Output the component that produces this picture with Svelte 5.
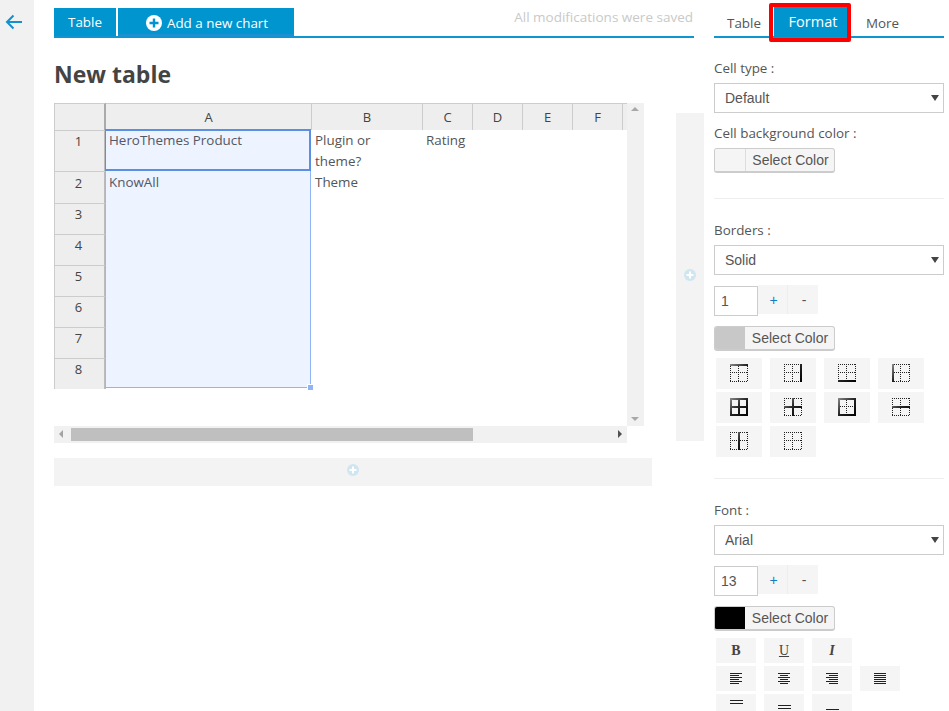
<script>
  const cols = ['A', 'B', 'C', 'D', 'E', 'F'];
  const rows = [
    { n: 1, a: 'HeroThemes Product', b: 'Plugin or theme?', c: 'Rating' },
    { n: 2, a: 'KnowAll', b: 'Theme', c: '' },
    { n: 3 }, { n: 4 }, { n: 5 }, { n: 6 }, { n: 7 }, { n: 8 }
  ];
  const T = 'M0 1H18', M = 'M0 9H18', B = 'M0 17H18', L = 'M1 0V18', C = 'M9 0V18', R = 'M17 0V18';
  const dotT = 'M0 .5H18', dotM = 'M0 8.500H18', dotB = 'M0 17.500H18', dotL = 'M.5 0V18', dotC = 'M8.500 0V18', dotR = 'M17.500 0V18';
  const borderIcons = [
    [T], [R], [B], [L],
    [T, M, B, L, C, R], [M, C], [T, B, L, R], [M],
    [C], []
  ];
  const dotted = [dotT, dotM, dotB, dotL, dotC, dotR];
  const aligns = [
    { side: 'l', short: 9 },
    { side: 'c', short: 8 },
    { side: 'r', short: 9 },
    { side: 'l', short: 12 }
  ];
  function lineX(a, w) {
    if (a.side === 'l') return 0;
    if (a.side === 'r') return 12 - w;
    return (12 - w) / 2;
  }
</script>

{#snippet selectBox(value)}
  <div class="select-wrap">
    <select><option>{value}</option></select>
  </div>
{/snippet}

{#snippet colorBtn(kind)}
  <button class="color-btn">
    <span class="swatch {kind}"></span>
    <span class="color-label">Select Color</span>
  </button>
{/snippet}

{#snippet spinner(value)}
  <div class="spinner">
    <input value={value} />
    <button class="plus">+</button>
    <button class="minus">-</button>
  </div>
{/snippet}

<svg class="defs" width="0" height="0" aria-hidden="true">
  <defs>
    <linearGradient id="ink" gradientUnits="userSpaceOnUse" x1="0" y1="0" x2="18" y2="18">
      <stop offset="0" stop-color="#8a8a8a" />
      <stop offset="0.500" stop-color="#222" />
      <stop offset="1" stop-color="#000" />
    </linearGradient>
  </defs>
</svg>

<div class="page">
  <aside class="rail">
    <svg class="back" width="18" height="16" viewBox="0 0 18 16" aria-label="Back">
      <path d="M17 8H2M8.500 1.500 2 8l6.500 6.500" fill="none" stroke="#1390d0" stroke-width="2" />
    </svg>
  </aside>

  <main class="main">
    <div class="topbar">
      <button class="tab-btn table-btn">Table</button>
      <button class="tab-btn chart-btn">
        <svg width="16" height="16" viewBox="0 0 16 16"><circle cx="8" cy="8" r="8" fill="#fff" /><path d="M8 3.500v9M3.500 8h9" stroke="#0095cf" stroke-width="2.400" /></svg>
        Add a new chart
      </button>
      <span class="saved">All modifications were saved</span>
    </div>

    <h1>New table</h1>

    <div class="work">
      <div class="sheet-area">
        <div class="sheet-row">
          <div class="sheet">
            <div class="cell corner"></div>
            {#each cols as c}<div class="cell col-head">{c}</div>{/each}
            <div class="cell tail-head"></div>
            {#each rows as r}
              <div class="cell row-head" class:second-row={r.n === 2}>{r.n}</div>
              <div class="cell data" class:second-row={r.n === 2}>{r.a ?? ''}</div>
              <div class="cell data b" class:second-row={r.n === 2}>{r.b ?? ''}</div>
              <div class="cell data">{r.c ?? ''}</div>
              <div class="cell data"></div>
              <div class="cell data"></div>
              <div class="cell data"></div>
              <div class="cell data"></div>
            {/each}
            <div class="range"></div>
            <div class="active"></div>
            <div class="handle"></div>
          </div>
          <div class="vscroll">
            <span class="arrow up"></span>
            <span class="arrow down"></span>
          </div>
        </div>
        <div class="hscroll">
          <span class="arrow left"></span>
          <div class="thumb"></div>
          <span class="arrow right"></span>
        </div>
        <div class="add-row">
          <svg width="12" height="12" viewBox="0 0 12 12"><circle cx="6" cy="6" r="6" fill="#cfe6f0" /><path d="M6 2.500v7M2.500 6h7" stroke="#fff" stroke-width="2" /></svg>
        </div>
      </div>
      <div class="add-col">
        <svg width="12" height="12" viewBox="0 0 12 12"><circle cx="6" cy="6" r="6" fill="#cfe6f0" /><path d="M6 2.500v7M2.500 6h7" stroke="#fff" stroke-width="2" /></svg>
      </div>
    </div>
  </main>

  <section class="panel">
    <div class="panel-tabs">
      <span class="ptab t1">Table</span>
      <span class="ptab active-tab">Format</span>
      <span class="ptab t3">More</span>
      <span class="highlight"></span>
    </div>

    <label class="first">Cell type :</label>
    {@render selectBox('Default')}
    <label class="second">Cell background color :</label>
    {@render colorBtn('blank')}

    <hr class="div1" />

    <label>Borders :</label>
    {@render selectBox('Solid')}
    {@render spinner('1')}
    {@render colorBtn('grey')}
    <div class="icon-grid">
      {#each borderIcons as solid}
        <button class="icon-btn" aria-label="Border">
          <svg width="18" height="18" viewBox="0 0 18 18">
            {#each dotted as d}<path d={d} fill="none" stroke="#222" stroke-width="1" stroke-dasharray="1 1" />{/each}
            {#each solid as d}<path d={d} fill="none" stroke="url(#ink)" stroke-width="2" />{/each}
          </svg>
        </button>
      {/each}
    </div>

    <hr class="div2" />

    <label>Font :</label>
    {@render selectBox('Arial')}
    {@render spinner('13')}
    {@render colorBtn('black')}
    <div class="font-grid">
      <button class="fbtn serif bold">B</button>
      <button class="fbtn serif under">U</button>
      <button class="fbtn serif ital">I</button>
      <span></span>
      {#each aligns as a}
        <button class="fbtn" aria-label="Align">
          <svg width="12" height="13" viewBox="0 0 12 13">
            {#each [0, 1, 2, 3, 4, 5] as i}
              {@const w = i % 2 ? a.short : 12}
              <rect x={lineX(a, w)} y={i * 2 + 1} width={w} height="1" fill="#222" />
            {/each}
          </svg>
        </button>
      {/each}
      <button class="fbtn valign" aria-label="Top"><span class="vl top"></span></button>
      <button class="fbtn valign" aria-label="Middle"><span class="vl mid"></span></button>
      <button class="fbtn valign" aria-label="Bottom"><span class="vl bot"></span></button>
    </div>
  </section>
</div>

<style>
  :global(body) { margin: 0; background: #fff; overflow: hidden; }
  .defs { position: absolute; }
  .page {
    display: flex;
    width: 949px;
    height: 711px;
    overflow: hidden;
    font-family: "Open Sans", sans-serif;
    color: #555;
  }
  .rail { width: 34px; flex: none; background: #f1f1f1; box-sizing: border-box; padding: 14px 0 0 5px; }
  .back { display: block; }

  .main { width: 640px; margin-left: 20px; flex: none; }
  .topbar {
    display: flex;
    padding-top: 8px;
    height: 28px;
    border-bottom: 2px solid #0f95cf;
    align-items: stretch;
  }
  .tab-btn {
    border: 0;
    background: #0095cf;
    color: #fff;
    font: 13.400px "Open Sans", sans-serif;
    padding: 0;
    display: flex;
    align-items: center;
    justify-content: center;
  }
  .table-btn { width: 62px; }
  .chart-btn { width: 176px; margin-left: 2px; gap: 5px; box-shadow: inset 0 -2px 0 #1f8fd0; padding: 1px 0 0 2px; }
  .saved { margin-left: auto; margin-right: 1px; color: #c9c9c9; font-size: 13.500px; line-height: 18px; }

  h1 { margin: 0 0 12px; padding-top: 20px; height: 33px; font-size: 23px; line-height: 33px; font-weight: 700; color: #444; }

  .work { display: flex; align-items: flex-start; }
  .sheet-area { width: 598px; flex: none; }
  .sheet-row { display: flex; width: 590px; height: 323px; }
  .sheet {
    position: relative;
    width: 573px;
    height: 323px;
    display: grid;
    grid-template-columns: 52px 206px 111px 50px 50px 50px 50px 4px;
    grid-template-rows: 27px 41px 32px 31px 31px 31px 31px 31px 31px;
    align-content: start;
  }
  .cell { box-sizing: border-box; font-size: 13.400px; line-height: 21px; }
  .corner, .col-head, .tail-head { background: #eee; border-top: 1px solid #ccc; border-right: 1px solid #ccc; }
  .corner { border-left: 1px solid #ccc; border-right: 2px solid #aaa; }
  .col-head { text-align: center; font-size: 13px; line-height: 26px; color: #444; }
  .tail-head { border-right: 0; }
  .row-head {
    background: #eee;
    border-left: 1px solid #ccc;
    border-top: 1px solid #ccc;
    border-right: 2px solid #bbb;
    text-align: center;
    color: #444;
    font-size: 13px;
    line-height: 20px;
    padding-right: 2px;
  }
  .data { padding: 0 3px; color: #555; }
  .data.b { padding-right: 14px; }
  .second-row { padding-top: 1px; }
  .range {
    position: absolute;
    left: 51px;
    top: 26px;
    width: 206px;
    height: 259px;
    box-sizing: border-box;
    background: rgba(50, 120, 255, 0.09);
    border-right: 1px solid #8fb5f6;
    border-bottom: 1px solid #8fb5f6;
    pointer-events: none;
  }
  .active {
    position: absolute;
    left: 51px;
    top: 26px;
    width: 206px;
    height: 42px;
    box-sizing: border-box;
    border: 2px solid #5a8fe2;
    border-left-width: 1px;
    pointer-events: none;
  }
  .handle { position: absolute; left: 253px; top: 281px; width: 5px; height: 5px; background: #8fb5f6; border: 1px solid #fff; }

  .vscroll { position: relative; width: 17px; background: #f1f1f1; }
  .hscroll { position: relative; width: 573px; height: 17px; background: #f1f1f1; }
  .thumb { position: absolute; left: 17px; top: 2px; width: 402px; height: 13px; background: #bfbfbf; }
  .arrow { position: absolute; width: 0; height: 0; border: 4px solid transparent; }
  .up { left: 4px; top: 4px; border-top: 0; border-bottom-color: #a8a8a8; }
  .down { left: 4px; bottom: 5px; border-bottom: 0; border-top-color: #a8a8a8; }
  .left { left: 5px; top: 4px; border-left: 0; border-right-color: #a3a3a3; }
  .right { right: 5px; top: 4px; border-right: 0; border-left-color: #505050; }

  .add-row {
    margin-top: 15px;
    height: 28px;
    box-sizing: border-box;
    padding-bottom: 4px;
    background: #f3f3f3;
    display: flex;
    align-items: center;
    justify-content: center;
  }
  .add-col {
    margin-left: 24px;
    margin-top: 10px;
    width: 28px;
    height: 328px;
    box-sizing: border-box;
    padding-bottom: 4px;
    flex: none;
    background: #f3f3f3;
    display: flex;
    align-items: center;
    justify-content: center;
  }

  .panel { width: 230px; margin-left: 20px; flex: none; }
  .panel-tabs { position: relative; height: 36px; border-bottom: 2px solid #0f95cf; }
  .ptab { position: absolute; font-size: 13.400px; color: #555; top: 14px; line-height: 18px; }
  .t1 { left: 13px; }
  .t3 { left: 152px; }
  .active-tab {
    left: 60px;
    top: 7px;
    width: 73px;
    height: 30px;
    box-sizing: border-box;
    padding-left: 5px;
    background: #0095cf;
    color: #fff;
    text-align: center;
    line-height: 29px;
    font-size: 14.500px;
  }
  .highlight {
    position: absolute;
    left: 55px;
    top: 3px;
    width: 82px;
    height: 39px;
    box-sizing: border-box;
    border: 4px solid #f00;
    border-radius: 2px;
  }

  label { display: block; font-size: 13.400px; line-height: 18px; color: #555; margin-bottom: 6px; }
  label.first { margin-top: 21px; }
  label.second { margin-top: 11px; }
  hr { border: 0; height: 1px; background: #eee; margin: 0; }
  .div1 { margin-top: 25px; margin-bottom: 22px; }
  .div2 { margin-top: 21px; margin-bottom: 22px; }

  .select-wrap { position: relative; height: 30px; }
  .select-wrap::after {
    content: "";
    position: absolute;
    right: 5px;
    top: 12px;
    border: 4px solid transparent;
    border-bottom: 0;
    border-top: 6px solid #444;
  }
  select {
    appearance: none;
    display: block;
    width: 100%;
    height: 30px;
    box-sizing: border-box;
    border: 1px solid #ccc;
    border-radius: 0;
    background: #fff;
    padding: 0 10px;
    font: 14px "Liberation Sans", sans-serif;
    color: #555;
  }
  .spinner { display: flex; margin-top: 11px; height: 30px; align-items: flex-start; }
  .spinner input {
    width: 44px;
    height: 30px;
    box-sizing: border-box;
    border: 1px solid #ccc;
    padding: 0 6px;
    font: 14px "Liberation Sans", sans-serif;
    color: #555;
    outline: 0;
    margin: 0;
  }
  .spinner button {
    width: 30px;
    height: 29px;
    border: 0;
    background: #f5f5f5;
    font: 14px "Liberation Sans", sans-serif;
    padding: 0 0 0 2px;
    margin: -1px 0 0;
  }
  .plus { color: #0f7fc0; border-right: 1px solid #eee !important; }
  .minus { color: #555; }

  .color-btn {
    display: flex;
    width: 121px;
    height: 25px;
    margin-top: 10px;
    padding: 0;
    box-sizing: border-box;
    border: 1px solid #ccc;
    border-bottom-width: 2px;
    border-radius: 3px;
    background: #f5f5f5;
    overflow: hidden;
    align-items: stretch;
  }
  label.second + .color-btn { margin-top: 0; }
  .swatch { width: 30px; flex: none; border-right: 1px solid #ddd; }
  .swatch.blank { background: #f5f5f5; }
  .swatch.grey { background: #c8c8c8; border-right: 0; }
  .swatch.black { background: #000; border-right: 0; }
  .color-label { flex: 1; font: 14px/22px "Liberation Sans", sans-serif; color: #555; text-align: center; padding-left: 1px; }

  .icon-grid {
    display: grid;
    grid-template-columns: repeat(4, 46px);
    grid-auto-rows: 31px;
    gap: 3px 8px;
    margin: 7px 0 0 2px;
  }
  .icon-btn {
    border: 0;
    padding: 6px 0 0 14px;
    background: #f5f5f5;
    display: flex;
    align-items: flex-start;
    justify-content: flex-start;
  }
  .font-grid {
    display: grid;
    grid-template-columns: repeat(4, 40px);
    grid-auto-rows: 25px;
    gap: 3px 8px;
    margin: 7px 0 0 2px;
  }
  .fbtn {
    border: 0;
    padding: 0;
    background: #f5f5f5;
    display: flex;
    align-items: center;
    justify-content: center;
    color: #444;
  }
  .serif { font: 14px "Liberation Serif", serif; }
  .bold { font-weight: 700; }
  .under { text-decoration: underline; }
  .ital { font-style: italic; font-weight: 700; }
  .valign { position: relative; }
  .vl { position: absolute; left: 14px; width: 13px; box-sizing: border-box; }
  .top { top: 6px; height: 4px; border-top: 1px solid #222; border-bottom: 1px solid #222; }
  .mid { top: 11px; height: 4px; border-top: 1px solid #222; border-bottom: 1px solid #222; }
  .bot { top: 15px; height: 2px; border-top: 1px solid #222; }
</style>
